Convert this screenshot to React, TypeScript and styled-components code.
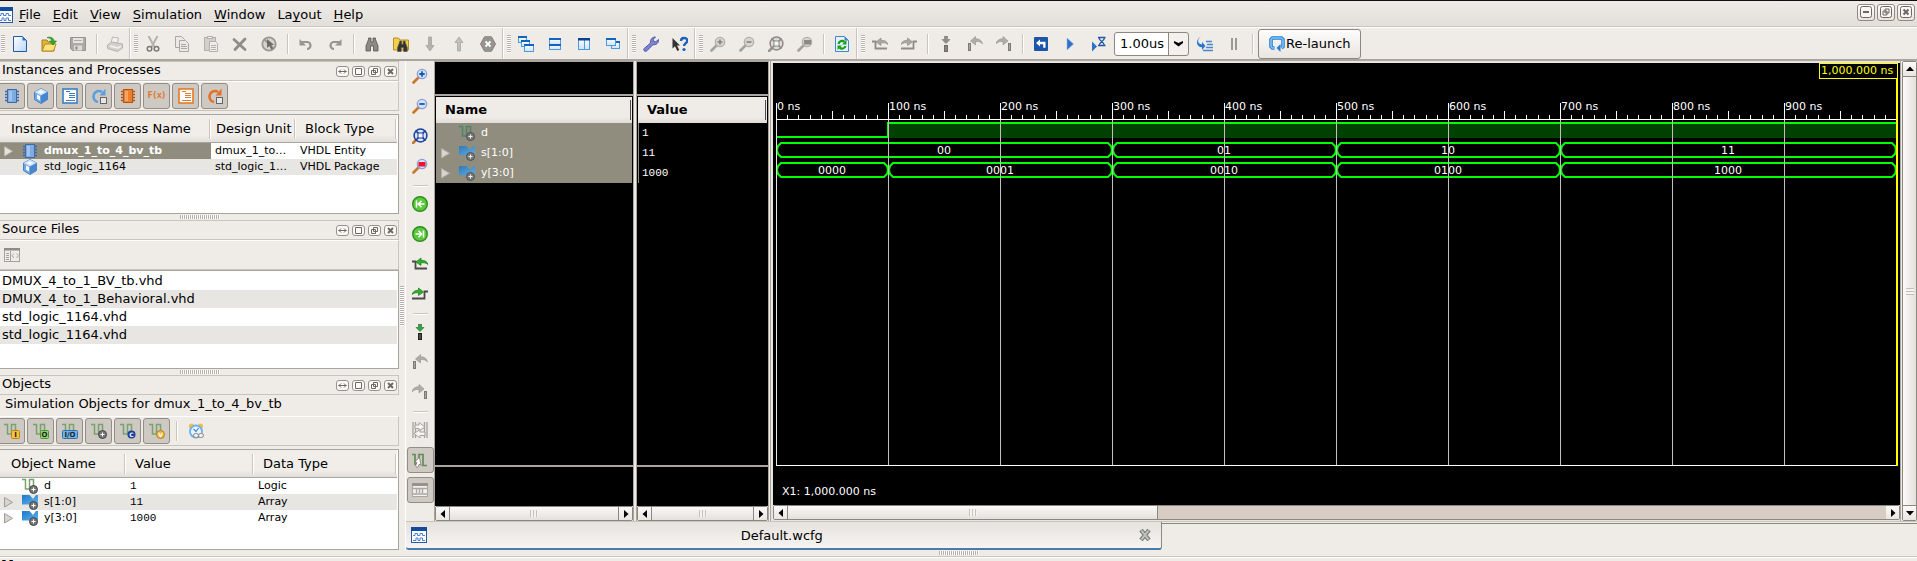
import React, { ReactNode, useLayoutEffect, useRef, useState } from "react";
import styled, { createGlobalStyle, css } from "styled-components";

const C = {
  bg: "#efebe7",
  line: "#c9c4bd",
  mid: "#aaa59e",
  dark: "#8c877f",
  press: "#cfc9c4",
  alt: "#e8e6e3",
  sel: "#918d7e",
};

const Global = createGlobalStyle`
  * { box-sizing: border-box; }
  html, body { margin: 0; background: ${C.bg}; overflow: hidden; }
  body, button, select { font-family: "DejaVu Sans", sans-serif; font-size: 13px; color: #000; }
  button { padding: 0; margin: 0; border: 0; background: none; }
`;

/* ---------- icons ---------- */

const GlassIcon = ({ gray, children }: { gray?: boolean; children?: ReactNode }) => (
  <>
    <path d="M1.500 14.500L7 9" stroke={gray ? "#a5a29e" : "#c9782a"} strokeWidth="2.600" strokeLinecap="round" />
    <circle cx="10" cy="6" r="4.700" fill={gray ? "#d8d5d1" : "#cfe5fb"} stroke={gray ? "#b3b0ac" : "#8e9cdf"} strokeWidth="1.300" />
    {children}
  </>
);

const FitIcon = ({ gray }: { gray?: boolean }) => {
  const c = gray ? "#8d8a86" : "#1c3f9c";
  return (
    <>
      <path d="M1 15l3-3" stroke={gray ? "#9a9793" : "#c9782a"} strokeWidth="2.600" strokeLinecap="round" />
      <circle cx="8.500" cy="7.500" r="6.400" fill={gray ? "#dedbd7" : "#d5e6fa"} stroke={c} strokeWidth="1.500" />
      <path d="M3.500 2.500L13.500 12.500M13.500 2.500L3.500 12.500" stroke={c} strokeWidth="1.700" />
      <rect x="6" y="5" width="5" height="5" fill="#f4f6fb" stroke={c} />
    </>
  );
};

const PrevEdge = ({ gray }: { gray?: boolean }) => (
  <>
    <path d="M0 5.500h3.500v7H15" fill="none" stroke={gray ? "#8f8c88" : "#4a4a4a"} strokeWidth="1.800" />
    <path d="M4 6l5-4v2.300c4 0 6 1 7 4.200-2-1.700-4-1.900-7-1.700V9.500z" fill={gray ? "#aaa7a3" : "#2fae2f"} stroke={gray ? "#8f8c88" : "#187a18"} strokeWidth=".7" />
  </>
);
const NextEdge = ({ gray }: { gray?: boolean }) => (
  <>
    <path d="M0 12.500h12.500v-7H16" fill="none" stroke={gray ? "#8f8c88" : "#4a4a4a"} strokeWidth="1.800" />
    <path d="M11.500 6l-5-4v2.300C3 4.300 1 5.300 0 8.500c2-1.700 4-1.900 6.500-1.700V9.500z" fill={gray ? "#aaa7a3" : "#2fae2f"} stroke={gray ? "#8f8c88" : "#187a18"} strokeWidth=".7" />
  </>
);
const Marker = ({ gray }: { gray?: boolean }) => (
  <>
    <path d="M6.500 0h3v3.500H12L8 7.500 4 3.500h2.500z" fill={gray ? "#908d89" : "#35a047"} stroke={gray ? "#7b7874" : "#1d7430"} strokeWidth=".6" />
    <rect x="6.500" y="9.500" width="3" height="6" fill={gray ? "#8a8783" : "#4c4c4c"} stroke={gray ? "#6f6c68" : "#222"} />
  </>
);
const prevMarker = (
  <>
    <rect x="1.500" y="7.500" width="2" height="7" fill="#a9a6a2" stroke="#7c7975" />
    <path d="M3.500 5l5-4.500v2.300c4 0 6 1.500 7 5-2-2-4-2.500-7-2.300V9z" fill="#b0ada9" stroke="#93908c" strokeWidth=".6" />
  </>
);
const nextMarker = (
  <>
    <rect x="12.500" y="7.500" width="2" height="7" fill="#a9a6a2" stroke="#7c7975" />
    <path d="M12 5L7 .5v2.300c-4 0-6 1.500-7 5 2-2 4-2.500 7-2.300V9z" fill="#b0ada9" stroke="#93908c" strokeWidth=".6" />
  </>
);
const Win = ({ x, y, w, h }: { x: number; y: number; w: number; h: number }) => (
  <>
    <rect x={x + 0.5} y={y + 0.5} width={w - 1} height={h - 1} fill="url(#winFill)" stroke="#4c9ae0" />
    <rect x={x} y={y} width={w} height="2" fill="#1263bd" />
  </>
);
const Chip = ({ a, b }: { a: string; b: string }) => (
  <>
    <path d="M1 3.500h14M1 6.500h14M1 9.500h14M1 12.500h14" stroke={b} strokeWidth="1.300" />
    <rect x="3.500" y="1.500" width="9" height="13" fill={a} stroke={b} />
    <path d="M5 3h3v10H5z" fill="#fff" opacity=".3" />
  </>
);
const Doc = ({ c }: { c: string }) => (
  <>
    <rect x="1" y="1" width="14" height="14" fill="#fff" stroke={c} strokeWidth="1.600" />
    <path d="M4 3.500h4M7 5.500h6M7 7.500h6M7 9.500h6M4 12.500h9" stroke={c} strokeWidth="1.100" />
  </>
);
const Cycle = ({ c }: { c: string }) => (
  <>
    <path d="M7 14A5.500 5.500 0 1 1 11 4" fill="none" stroke={c} strokeWidth="2.600" />
    <path d="M8.500 7.500h6v-7z" fill={c} />
    <rect x="9.500" y="9.500" width="6" height="6" fill="#e8e6e3" stroke="#666" />
  </>
);
const binoc = (f: string) => (
  <path d="M2 15V10L4.500 3.500V2h2.500v4h2V2h2.500v1.500L14 10v5H9.500v-5h-3v5z" fill={f} stroke="#55524f" strokeWidth=".8" />
);
const Wave = ({ c = "#79a36c", children }: { c?: string; children?: ReactNode }) => (
  <>
    <path d="M0 1.500h3.500v9.500h4V1.500h4V12" fill="none" stroke={c} strokeWidth="1.500" />
    {children}
  </>
);
const Gear = () => (
  <>
    <circle cx="11.500" cy="11.500" r="4" fill="#77777a" stroke="#454547" />
    <path d="M11.500 9.500v4M9.500 11.500h4" stroke="#fff" strokeWidth="1" />
  </>
);
const Tag = ({ f, s, w = 8, t }: { f: string; s: string; w?: number; t: string }) => (
  <>
    <rect x={15.5 - w} y="7.500" width={w} height="8" fill={f} stroke={s} rx="1" />
    <text x={15.5 - w / 2} y="14" fontSize="7" fontWeight="bold" textAnchor="middle" fill="#222">{t}</text>
  </>
);
const waveWindow = (
  <>
    <rect x=".5" y=".5" width="15" height="15" fill="#fff" stroke="#2757a5" />
    <rect x="0" y="0" width="16" height="4" fill="#0f4c9e" />
    <path d="M2 8.500h2v-2h2.500v2H9v-2h2.500v2H14M2 13.500h3v-2.500h2v2.500h2v-2.500h2.500v2.500H14" fill="none" stroke="#4a80d8" />
  </>
);

const icons: Record<string, ReactNode> = {
  waveWindow,
  new: (
    <>
      <path d="M1.500.5h9l4 4v11h-13z" fill="url(#pageFill)" stroke="#2559a4" />
      <path d="M10.500.5v4h4z" fill="#2f6fc4" />
    </>
  ),
  open: (
    <>
      <path d="M1 15V4h5l1 2h6v9z" fill="#e0b63c" stroke="#a97c18" />
      <path d="M1 15l3-7h11l-2.500 7z" fill="#fbe27a" stroke="#b58a22" />
      <path d="M6 1.500c4-1 6.500 0 7 3.500h2.500L12 9 8.500 5H11C10.500 3 9 2 6 1.500z" fill="#35a82c" stroke="#1c7d18" strokeWidth=".6" />
    </>
  ),
  save: (
    <>
      <path d="M.5 1.500h15v13h-13l-2-2z" fill="#aeaba7" stroke="#96938f" />
      <rect x="3" y="2" width="10" height="5" fill="#e6e4e1" />
      <path d="M4 4.500h8" stroke="#b0ada9" />
      <rect x="4" y="9.500" width="8" height="5" fill="#dddad7" />
      <rect x="5.500" y="10.500" width="2" height="3" fill="#8b8884" />
    </>
  ),
  print: (
    <>
      <path d="M4 7l1.500-6 6 1-1 5z" fill="#f3f1ee" stroke="#bbb8b4" />
      <path d="M.5 9l4-3 11 2v4l-5 3.500-10-3z" fill="#d3d0cc" stroke="#b5b2ae" />
      <path d="M3 10l8 2 3-2" stroke="#f5f3f0" strokeWidth="1.400" fill="none" />
    </>
  ),
  cut: (
    <>
      <path d="M3.500 0l6 11M12.500 0l-6 11" stroke="#b5b2ae" strokeWidth="2" />
      <circle cx="4.500" cy="12.700" r="2.300" fill="none" stroke="#7d7a76" strokeWidth="1.500" />
      <circle cx="11.500" cy="12.700" r="2.300" fill="none" stroke="#7d7a76" strokeWidth="1.500" />
    </>
  ),
  copy: (
    <g fill="#eceae7" stroke="#aaa7a3">
      <path d="M1.500.5h6l3 3v8h-9z" />
      <path d="M5.500 4.500h6l3 3v8h-9z" />
      <path d="M7 8.500h5M7 10.500h6M7 12.500h6" />
    </g>
  ),
  paste: (
    <g stroke="#b3b0ac">
      <rect x="1.500" y="1.500" width="11" height="13" fill="#d2cfcb" />
      <rect x="4.500" y=".5" width="5" height="2" fill="#eee" />
      <path d="M6.500 5.500h6l2 2v8h-8z" fill="#f0eeeb" />
      <path d="M8 9.500h5M8 11.500h5M8 13.500h5" />
    </g>
  ),
  del: <path d="M2 3.500l11 10M13 3L3 13.500" stroke="#8f8c88" strokeWidth="2.800" strokeLinecap="round" />,
  nosel: (
    <>
      <circle cx="8" cy="8" r="6.700" fill="#d6d3cf" stroke="#9b9894" strokeWidth="1.800" />
      <path d="M3 3l10 10" stroke="#9b9894" strokeWidth="1.800" />
      <path d="M6 3v9l2.300-2 2 3.500 1.700-1-2-3.300 3-.5z" fill="#6f6c68" />
    </>
  ),
  undo: (
    <>
      <path d="M4 6h5a3.500 3.500 0 0 1 0 7" fill="none" stroke="#989591" strokeWidth="2.200" />
      <path d="M1.500 3v6.500H8z" fill="#989591" />
    </>
  ),
  redo: (
    <>
      <path d="M12 6H7a3.500 3.500 0 0 0 0 7" fill="none" stroke="#989591" strokeWidth="2.200" />
      <path d="M14.500 3v6.500H8z" fill="#989591" />
    </>
  ),
  find: binoc("#8d8a86"),
  findIn: (
    <>
      <path d="M.5 14V2h5l1.500 2h8.500v10z" fill="#f1d04a" stroke="#b58f24" />
      <g transform="translate(3 3.500) scale(.8)">{binoc("#333")}</g>
    </>
  ),
  down: <path d="M6.500 1h3v8.500H12L8 15 4 9.500h2.500z" fill="#b5b2ae" stroke="#a09d99" strokeWidth=".7" />,
  up: <path d="M6.500 15h3V6.500H12L8 1 4 6.500h2.500z" fill="#c2bfbb" stroke="#a09d99" strokeWidth=".7" />,
  stop: (
    <>
      <path d="M4.500.8h7L15.500 8l-4 7.200h-7L.5 8z" fill="#979490" stroke="#85827e" />
      <path d="M5.500 5.500l5 5M10.500 5.500l-5 5" stroke="#fff" strokeWidth="1.800" />
    </>
  ),
  cascade: (<><Win x={0} y={0} w={9} h={7} /><Win x={3} y={4} w={9} h={7} /><Win x={6} y={8} w={10} h={8} /></>),
  tileH: (<><Win x={2} y={2} w={12} h={7} /><Win x={2} y={8} w={12} h={6} /></>),
  tileV: (<><Win x={2} y={2} w={7} h={12} /><Win x={8} y={2} w={6} h={12} /><path d="M2 2h12v2.500H2z" fill="#0d3f94" /></>),
  float: (<><Win x={6} y={5} w={9} h={8} /><Win x={1} y={2} w={10} h={8} /></>),
  wrench: (
    <path d="M1 14.500c-1-1 0-2 .5-2.300L7.500 7C7 4 9 .8 12.500 1L10.300 3.300l.5 2 2 .5L15.500 3.500c.5 3.500-2.500 5.700-5.500 5.200l-6 6c-1 1-2.200.8-3-.2z" fill="#7d83cf" stroke="#4a4fa3" strokeWidth=".9" />
  ),
  help: (
    <>
      <path d="M.5 2v10.500l2.500-2.300 2.300 4.800 2-1-2.300-4.500h3z" fill="#333" />
      <path d="M9 5c0-4 6.300-4 6.300-.3 0 2.500-3.200 2.500-3.200 5.300" fill="none" stroke="#1a62b8" strokeWidth="2.400" />
      <circle cx="12" cy="13.500" r="1.600" fill="#1a62b8" />
    </>
  ),
  zoomInG: <GlassIcon gray><path d="M7.500 6h5M10 3.500v5" stroke="#85827e" strokeWidth="1.600" /></GlassIcon>,
  zoomOutG: <GlassIcon gray><path d="M7.500 6h5" stroke="#85827e" strokeWidth="1.600" /></GlassIcon>,
  zoomSelG: <GlassIcon gray><rect x="7" y="4" width="7" height="4.500" fill="#8c8985" /></GlassIcon>,
  fitG: <FitIcon gray />,
  zoomIn: <GlassIcon><path d="M7.300 6h5.400M10 3.300v5.400" stroke="#1c57a8" strokeWidth="1.800" /></GlassIcon>,
  zoomOut: <GlassIcon><path d="M7.300 6h5.400" stroke="#1c57a8" strokeWidth="1.800" /></GlassIcon>,
  zoomSel: <GlassIcon><rect x="6.500" y="4" width="7" height="4.500" fill="#f0102a" /></GlassIcon>,
  fit: <FitIcon />,
  refresh: (
    <>
      <path d="M1.500.5h9l4 4v11h-13z" fill="#e6f1fd" stroke="#4584cf" />
      <path d="M10.500.5v4h4z" fill="#4584cf" />
      <path d="M4.500 8a3.500 3.500 0 0 1 6-2M11.500 10a3.500 3.500 0 0 1-6 1.500" fill="none" stroke="#17a11b" strokeWidth="2.200" />
      <path d="M12.500 4v4.500H8zM3.500 14V9.500H8z" fill="#17a11b" />
    </>
  ),
  prevEdgeG: <PrevEdge gray />,
  nextEdgeG: <NextEdge gray />,
  prevEdge: <PrevEdge />,
  nextEdge: <NextEdge />,
  markerG: <Marker gray />,
  marker: <Marker />,
  prevMarker,
  nextMarker,
  restart: (
    <>
      <rect x="1" y="1" width="14" height="14" rx="1" fill="#1b56aa" />
      <path d="M3 7l4-3.500v2.300h5.500v6h-2.300V8.300H7v2.300z" fill="#fff" />
    </>
  ),
  run: <path d="M5 2v12l6.500-6z" fill="#2f6fc4" stroke="#8fb6e6" strokeWidth=".6" />,
  runFor: (
    <>
      <path d="M1 5.500v10L6 10.500z" fill="#2f6fc4" />
      <path d="M7 1.500h7.500M7 9.500h7.500M8 2c0 3 5.500 4 5.500 7.500M13.500 2c0 3-5.500 4-5.500 7.500" fill="none" stroke="#1c57a8" strokeWidth="1.300" />
    </>
  ),
  step: (
    <>
      <path d="M4 .5C0 3 0 8 5 8.500V6l3.500 4L5 14v-2.700C-1.500 11-1.500 3 4 .5z" fill="#2a77cc" />
      <path d="M9 5.500h6M10 8.500h6M9 11.500h7M6 14.500h10" stroke="#4a86cf" strokeWidth="1.500" />
    </>
  ),
  pause: (
    <>
      <rect x="5" y="2" width="2" height="12" fill="#9b9894" />
      <rect x="9" y="2" width="2" height="12" fill="#9b9894" />
    </>
  ),
  relaunch: (
    <>
      <path d="M5.500 12H3.500L2 10.500v-7L3.500 2h9L14 3.500v7L12.500 12" fill="none" stroke="#2a7fd0" strokeWidth="3.600" />
      <path d="M5.500 12H3.500L2 10.500v-7L3.500 2h9L14 3.500v7L12.500 12" fill="none" stroke="#7cc4fb" strokeWidth="1.600" />
      <path d="M7.500 12l4-4v8z" fill="#2a7fd0" />
    </>
  ),
  chip: <Chip a="#7fabe3" b="#3f6aa8" />,
  chipO: <Chip a="#ee7f2d" b="#b4520f" />,
  cube: (
    <>
      <path d="M8 .5l6.500 3.500v7.500L8 15.500 1.500 11.500V4z" fill="#6fa8e4" stroke="#4a7fbe" />
      <path d="M8 .5l6.500 3.500L8 7.500 1.500 4z" fill="#cde2f8" />
      <path d="M8 7.500v8l6.500-4V4z" fill="#4a86cf" />
      <path d="M4 6.500l3 1.600v4.500L4 10.700zM4.500 4L8 2.300 11.500 4 8 5.800z" fill="#f4f9ff" />
    </>
  ),
  doc: <Doc c="#3e7dc0" />,
  docO: <Doc c="#e07b2a" />,
  cycle: <Cycle c="#5b9fe0" />,
  cycleO: <Cycle c="#e0722a" />,
  srcWin: (
    <>
      <rect x=".5" y="1.500" width="15" height="13" fill="#efedea" stroke="#a5a29e" />
      <path d="M0 1h16v2.500H0z" fill="#8f8c88" />
      <path d="M6.500 4v10M2 6.500h3M2 8.500h3M2 10.500h3M2 12.500h3M10 6.500L8 8.700l2 2.300M12.500 6.500l2 2.200-2 2.300" fill="none" stroke="#a5a29e" />
    </>
  ),
  sigI: <Wave><Tag f="#fbc33a" s="#b98412" t="I" /></Wave>,
  sigO: <Wave><Tag f="#8fd56b" s="#4d9138" t="O" /></Wave>,
  sigIO: <Wave><Tag f="#6fb4ee" s="#2f6fae" w={15} t="I/O" /></Wave>,
  sigInt: <Wave><Gear /></Wave>,
  sigSel: <Wave c="#3f8468"><Gear /></Wave>,
  sigC: (
    <Wave>
      <circle cx="11.500" cy="11.500" r="4" fill="#1d3f9a" />
      <text x="11.500" y="14" fontSize="6" fontWeight="bold" textAnchor="middle" fill="#fff">C</text>
    </Wave>
  ),
  sigV: (
    <Wave>
      <circle cx="11.500" cy="11.500" r="4" fill="#efb845" stroke="#b5811b" />
      <text x="11.500" y="14" fontSize="6" fontWeight="bold" textAnchor="middle" fill="#fff">V</text>
    </Wave>
  ),
  clock: (
    <>
      <circle cx="3.500" cy="3" r="2.600" fill="#f4bd4c" />
      <circle cx="12.500" cy="3" r="2.600" fill="#f4bd4c" />
      <circle cx="8" cy="8.500" r="6" fill="#e8f4fe" stroke="#6bb1ea" strokeWidth="1.800" />
      <path d="M5.500 6L8 8.500 10.500 5" fill="none" stroke="#4a86cf" strokeWidth="1.200" />
      <rect x="5.500" y="10.500" width="5" height="4" rx="2" fill="#eee" stroke="#888" />
      <rect x="10.500" y="10.500" width="5" height="4" rx="2" fill="#eee" stroke="#888" />
    </>
  ),
  bus: (
    <>
      <path d="M0 1h7.500L11 5l3-4h2v9.500H0z" fill="url(#busFill)" />
      <Gear />
    </>
  ),
  first: (
    <>
      <circle cx="8" cy="8" r="7.300" fill="#5cc83c" stroke="#2a8f1d" strokeWidth="1.400" />
      <path d="M4.500 4.500v7M12.500 8H7M9.500 4.700L6.300 8l3.200 3.300" fill="none" stroke="#fff" strokeWidth="1.500" />
    </>
  ),
  last: (
    <>
      <circle cx="8" cy="8" r="7.300" fill="#5cc83c" stroke="#2a8f1d" strokeWidth="1.400" />
      <path d="M11.500 4.500v7M3.500 8H9M6.500 4.700L9.700 8l-3.200 3.300" fill="none" stroke="#fff" strokeWidth="1.500" />
    </>
  ),
  swap: (
    <>
      <path d="M1 0v16M3.500 0v16M12.500 0v16M15 0v16" stroke="#a5a29e" strokeWidth="1.300" />
      <path d="M3 3h4V.5L13 5 7 9V6.500H3z" fill="#f6f4f1" stroke="#a5a29e" />
      <path d="M13 10H8V7.500L2 11.500 8 16v-2.500h5z" fill="#f6f4f1" stroke="#a5a29e" />
    </>
  ),
  snap: (
    <>
      <path d="M0 2.500h3V13M7 13V2.500h4v11h4" fill="none" stroke="#5f8f57" strokeWidth="1.700" />
      <path d="M7.500 5L3 10l2 .5L3.500 14l2 1.500 2-3.500 1.500 1.500z" fill="#fff" stroke="#77746f" strokeWidth=".8" />
    </>
  ),
  table: (
    <>
      <rect x=".5" y="1.500" width="15" height="13" fill="#f3f1ee" stroke="#aaa7a3" />
      <path d="M0 1h16v3H0z" fill="#96938f" />
      <path d="M1 6.500h14M4.500 7v4M7.500 7v4M10.500 7v4M1 12h14" stroke="#aaa7a3" strokeWidth="1.400" />
    </>
  ),
  closeTab: (
    <>
      <path d="M4 3l8 10M12 3L4 13" stroke="#7b7f78" strokeWidth="4.400" />
      <path d="M4.500 3.500l7 9M11.500 3.500l-7 9" stroke="#c3c6c0" strokeWidth="2" />
    </>
  ),
};

const Svg = styled.svg`
  display: block;
  flex: none;
  font-family: "DejaVu Sans", sans-serif;
`;
const Icon = ({ n, size = 16 }: { n: string; size?: number }) => (
  <Svg width={size} height={size} viewBox="0 0 16 16" fill="none" aria-hidden>{icons[n]}</Svg>
);
const HiddenSvg = styled.svg`position: absolute;`;
const Gradients = () => (
  <HiddenSvg width="0" height="0" aria-hidden>
    <linearGradient id="pageFill" x1="0" y1="0" x2="1" y2="1"><stop offset="0" stopColor="#fff" /><stop offset="1" stopColor="#b9d6f8" /></linearGradient>
    <linearGradient id="winFill" x1="0" y1="0" x2="0" y2="1"><stop offset="0" stopColor="#fff" /><stop offset="1" stopColor="#cfe2f6" /></linearGradient>
    <linearGradient id="busFill" x1="0" y1="0" x2="1" y2="1"><stop offset="0" stopColor="#1d78c6" /><stop offset="1" stopColor="#5fb4f0" /></linearGradient>
  </HiddenSvg>
);

/* ---------- frame ---------- */

const Window = styled.div`
  height: 100vh;
  display: flex;
  flex-direction: column;
  overflow: hidden;
  background: ${C.bg};
  border-top: 1px solid #120d12;
  line-height: 16px;
`;
const MenuBar = styled.nav`
  flex: none;
  height: 26px;
  display: flex;
  align-items: center;
  padding-top: 2px;
  background: linear-gradient(#efebe7, #e2dfda);
  border-bottom: 1px solid ${C.line};
`;
const MenuIcon = styled.span`margin-left: -3px;`;
const MenuItem = styled.button`
  padding: 0 6px;
  line-height: 16px;
  u {
    text-decoration-thickness: 1px;
    text-underline-offset: 2px;
    text-decoration-skip-ink: none;
  }
`;
const WindowButtons = styled.div`
  margin-left: auto;
  display: flex;
  gap: 2px;
  padding: 0 2px 5px 0;
`;
const WindowButton = styled.button`
  width: 18px;
  height: 17px;
  border: 1px solid #96887f;
  border-radius: 3px;
  background: linear-gradient(#fff, #e8e4df);
  display: grid;
  place-items: center;
`;

const ToolBar = styled.div`
  flex: none;
  height: 34px;
  display: flex;
  border-top: 1px solid #fff;
  border-bottom: 2px solid ${C.mid};
`;
const Group = styled.div<{ $first?: boolean; $last?: boolean }>`
  display: flex;
  align-items: center;
  padding-left: ${(p) => (p.$first ? 1 : 3)}px;
  ${(p) => !p.$last && css`
    border-right: 1px solid #fff;
    box-shadow: inset -1px 0 ${C.line};
    padding-right: 1px;
  `}
`;
const Handle = styled.span`
  width: 4px;
  height: 18px;
  background: repeating-linear-gradient(#b5b1ab 0 1px, #fff 1px 2px);
`;
const Tool = styled.button`
  width: 29px;
  height: 28px;
  display: grid;
  place-items: center;
`;
const Sep = styled.span`
  width: 8px;
  height: 20px;
  background: linear-gradient(90deg, transparent 4px, ${C.line} 4px 5px, #fff 5px 6px, transparent 6px);
`;
const Combo = styled.div`
  display: grid;
  align-items: center;
  margin: 0 1px;
  select, svg { grid-area: 1 / 1; }
  svg { justify-self: end; margin-right: 6px; pointer-events: none; }
`;
const Select = styled.select`
  appearance: none;
  width: 75px;
  height: 24px;
  padding: 0 0 0 5px;
  border: 1px solid ${C.dark};
  border-radius: 3px;
  background: linear-gradient(90deg, #fff 53px, ${C.dark} 53px 54px, #f3f0ed 54px);
`;
const Relaunch = styled.button`
  height: 30px;
  margin-left: 2px;
  padding: 0 9px 0 10px;
  display: flex;
  align-items: center;
  gap: 1px;
  border: 1px solid ${C.dark};
  border-radius: 3px;
  background: linear-gradient(#fdfcfb, #e9e5e0);
`;

const Main = styled.main`
  flex: 1;
  min-height: 0;
  display: flex;
`;

/* ---------- left dock ---------- */

const Dock = styled.aside`
  flex: none;
  width: 399px;
  display: flex;
  flex-direction: column;
  min-height: 0;
`;
const Panel = styled.section<{ $fixed: number; $share: number }>`
  flex: ${(p) => p.$share} 1 ${(p) => p.$fixed}px;
  min-height: 0;
  display: flex;
  flex-direction: column;
`;
const TitleBar = styled.header`
  flex: none;
  height: 20px;
  display: flex;
  justify-content: space-between;
  padding: 0 1px 0 2px;
  border-top: 1px solid ${C.line};
  border-bottom: 1px solid ${C.line};
  border-right: 1px solid ${C.line};
`;
const Title = styled.h2`
  margin: 0;
  font-size: 13px;
  font-weight: 400;
  line-height: 16px;
`;
const TitleButtons = styled.div`
  display: flex;
  align-items: center;
  gap: 3px;
`;
const TitleButton = styled.button`
  width: 13px;
  height: 11px;
  border: 1px solid #96918a;
  border-radius: 3px;
  background: #fbfaf8;
  display: grid;
  place-items: center;
`;
const DockTools = styled.div`
  flex: none;
  height: 30px;
  display: flex;
  align-items: center;
  gap: 2px;
  margin-left: -2px;
  border-top: 1px solid #fff;
  border-right: 1px solid ${C.line};
  border-bottom: 1px solid ${C.line};
`;
const Toggle = styled.button<{ $on?: boolean }>`
  width: 27px;
  height: 26px;
  display: grid;
  place-items: center;
  ${(p) => p.$on && css`
    border: 1px solid #938d86;
    border-radius: 3px;
    background: ${C.press};
  `}
`;
const FxLabel = styled.span`
  color: #dd7f3a;
  font-size: 8px;
  line-height: 12px;
  font-weight: 700;
`;
const Caption = styled.p`
  flex: none;
  margin: 0;
  height: 21px;
  padding-left: 5px;
  line-height: 18px;
`;
const Body = styled.div<{ $gap?: boolean }>`
  flex: 1;
  min-height: 0;
  margin-top: ${(p) => (p.$gap ? 3 : 0)}px;
  border: solid ${C.mid};
  border-width: 1px 1px 1px 0;
  padding-right: 1px;
  background: #fff;
  overflow: hidden;
`;
const Grid = styled.table`
  width: 100%;
  table-layout: fixed;
  border-collapse: collapse;
  font-size: 11px;
  thead { background: linear-gradient(#f1eeea 20px, #e2deda); }
`;
const Th = styled.th<{ $pad: number; $w?: number }>`
  width: ${(p) => (p.$w ? `${p.$w}px` : "auto")};
  height: 27px;
  padding: 2px 0 0 ${(p) => p.$pad}px;
  border-bottom: 1px solid ${C.mid};
  background: linear-gradient(${C.line}, ${C.line}) right 1px top 4px / 1px 20px no-repeat,
    linear-gradient(#fff, #fff) right 0 top 4px / 1px 20px no-repeat;
  text-align: left;
  font-size: 13px;
  font-weight: 400;
  white-space: nowrap;
`;
const Tr = styled.tr<{ $alt?: boolean }>`
  background: ${(p) => (p.$alt ? C.alt : "#fff")};
`;
const Td = styled.td<{ $sel?: boolean; $mono?: boolean }>`
  height: 16px;
  padding: 0 0 0 4px;
  line-height: 16px;
  white-space: nowrap;
  overflow: hidden;
  ${(p) => p.$sel && css`
    background: ${C.sel};
    color: #fff;
    font-weight: 700;
  `}
  ${(p) => p.$mono && css`font-family: "Liberation Mono", monospace;`}
`;
const NameCell = styled.div`
  display: grid;
  grid-template-columns: 18px 22px 1fr;
  align-items: center;
  height: 16px;
`;
const FileList = styled.ul`
  margin: 0;
  padding: 1px 0 0;
  list-style: none;
`;
const FileRow = styled.li<{ $alt?: boolean }>`
  height: 18px;
  padding-left: 2px;
  line-height: 18px;
  background: ${(p) => (p.$alt ? C.alt : "#fff")};
`;
const HSplit = styled.div`
  flex: none;
  height: 6px;
  display: grid;
  place-items: center;
  &::after {
    content: "";
    width: 40px;
    height: 4px;
    background: repeating-linear-gradient(90deg, #b5b1ab 0 1px, #fff 1px 2px);
  }
`;
const VSplit = styled.div`
  flex: none;
  width: 6px;
  display: grid;
  place-items: center;
  &::after {
    content: "";
    width: 4px;
    height: 40px;
    background: repeating-linear-gradient(#b5b1ab 0 1px, #fff 1px 2px);
  }
`;

const Expander = ({ light }: { light?: boolean }) => (
  <Svg width="10" height="12" viewBox="0 0 10 12" aria-hidden>
    <path d="M.5 1.500v9.500L8.500 6.300z" fill={light ? "#e4e2de" : "#d8d5d1"} stroke={light ? "#b9b6af" : "#a09d99"} />
  </Svg>
);

const glyphs: Record<string, string> = {
  arrows: "M.5 4.500h8M3 2.500l-2 2 2 2M6 2.500l2 2-2 2",
  max: "M1.500 1.500h6v6h-6z",
  restore: "M3.500 1.500h4v4h-4zM1.500 3.500h4v4h-4z",
  close: "M2 2l5 5M7 2l-5 5",
  min: "M1.500 4.500h6",
};
const Glyph = ({ n }: { n: string }) => (
  <Svg width="9" height="9" viewBox="0 0 9 9" aria-hidden>
    <path d={glyphs[n]} fill="none" stroke="#6c6862" strokeWidth={n === "close" || n === "min" ? 2 : 1} />
  </Svg>
);
const BoxGlyph = ({ n }: { n: string }) => (
  <Svg width="12" height="12" viewBox="0 0 12 12" aria-hidden>
    <rect x=".5" y=".5" width="11" height="11" rx="2" fill="#f8f6f4" stroke="#6c6862" />
    <path transform="translate(1.500 1.500)" d={glyphs[n]} fill="none" stroke="#6c6862" strokeWidth={n === "restore" ? 1 : 2} />
  </Svg>
);
const PanelTitle = ({ children }: { children: ReactNode }) => (
  <TitleBar>
    <Title>{children}</Title>
    <TitleButtons>
      {["arrows", "max", "restore", "close"].map((g) => (
        <TitleButton key={g} aria-label={g}><Glyph n={g} /></TitleButton>
      ))}
    </TitleButtons>
  </TitleBar>
);

/* ---------- wave area ---------- */

const Workspace = styled.div`
  flex: 1;
  min-width: 0;
  display: flex;
  flex-direction: column;
  border-left: 1px solid #fff;
`;
const Viewer = styled.div`
  flex: 1;
  min-height: 0;
  display: flex;
`;
const SideTools = styled.div`
  flex: none;
  width: 28px;
  display: flex;
  flex-direction: column;
  align-items: center;
`;
const SideSlot = styled.div`
  height: 30px;
  display: grid;
  place-items: center;
`;
const SideSep = styled.span`
  width: 15px;
  height: 8px;
  background: linear-gradient(transparent 4px, ${C.line} 4px 5px, #fff 5px 6px, transparent 6px);
`;
const Pane = styled.div<{ $w?: number }>`
  flex: ${(p) => (p.$w ? `0 0 ${p.$w}px` : "1")};
  min-width: 0;
  display: flex;
  flex-direction: column;
  border: solid ${C.mid};
  border-width: 1px 1px 0 1px;
  margin-right: 2px;
`;
const Black = styled.div<{ $h?: number }>`
  flex: ${(p) => (p.$h ? `0 0 ${p.$h}px` : "1")};
  min-height: 0;
  background: #000;
  color: #fff;
  font-size: 11px;
`;
const Bar = styled.div`
  flex: none;
  height: 2px;
  background: ${C.mid};
`;
const ColumnHead = styled.div`
  height: 26px;
  margin: 1px 1px 0;
  padding: 0 1px 0 9px;
  display: flex;
  align-items: center;
  justify-content: space-between;
  background: linear-gradient(${C.bg} 20px, #e0dbd6);
  color: #000;
  font-size: 13px;
  font-weight: 700;
  &::after { content: ""; width: 1px; height: 20px; background: #4a4a4a; }
`;
const SignalRow = styled.div`
  display: grid;
  grid-template-columns: 18px 22px 1fr;
  align-items: center;
  height: 20px;
  margin: 0 1px;
  padding-left: 5px;
  line-height: 18px;
  background: ${C.sel};
  svg { opacity: 0.85; }
`;
const ValueRow = styled.div`
  height: 20px;
  margin-left: 1px;
  padding-left: 3px;
  border-left: 1px solid ${C.sel};
  font-family: "Liberation Mono", monospace;
  line-height: 20px;
`;
const WavePane = styled(Pane)`
  border: solid #e8e5e1;
  border-width: 2px 0 1px 2px;
  margin: 0;
  box-shadow: -1px 0 ${C.mid}, 1px 0 ${C.mid};
`;
const WaveHost = styled.div`
  flex: 1;
  min-height: 0;
  background: #000;
  overflow: hidden;
`;
const ScrollBar = styled.div<{ $v?: boolean; $m?: number }>`
  flex: none;
  display: flex;
  flex-direction: ${(p) => (p.$v ? "column" : "row")};
  ${(p) => (p.$v ? "width: 15px; margin-left: 2px;" : "height: 15px;")}
  border: 1px solid ${C.dark};
  border-radius: 2px;
  background: #d7cdc5;
`;
const ScrollArrow = styled.button<{ $v?: boolean }>`
  flex: none;
  ${(p) => (p.$v ? "height: 14px;" : "width: 13px;")}
  display: grid;
  place-items: center;
  background: linear-gradient(#fbfaf9, #e9e6e2);
`;
const Thumb = styled.div<{ $v?: boolean; $size: string }>`
  flex: 0 1 ${(p) => p.$size};
  display: grid;
  place-items: center;
  border: solid ${C.dark};
  border-width: ${(p) => (p.$v ? "1px 0" : "0 1px")};
  background: linear-gradient(${(p) => (p.$v ? "90deg" : "180deg")}, #fbfaf9, #e4e0dc);
  &::after {
    content: "";
    width: 8px;
    height: 7px;
    background: repeating-linear-gradient(${(p) => (p.$v ? "180deg" : "90deg")}, #c4bfb9 0 1px, #f6f4f2 1px 3px);
  }
`;
const Spacer = styled.span`flex: 1;`;

const arrows: Record<string, string> = {
  left: "M6 0L1.500 4 6 8z",
  right: "M2 0l4.500 4L2 8z",
  up: "M0 6l4-4.500L8 6z",
  down: "M0 2l4 4.500L8 2z",
};
const Arrow = ({ d }: { d: string }) => (
  <Svg width="8" height="8" viewBox="0 0 8 8" aria-hidden><path d={arrows[d]} fill="#000" /></Svg>
);
const Scroll = ({ v, size = "100%" }: { v?: boolean; size?: string }) => (
  <ScrollBar $v={v}>
    <ScrollArrow $v={v} aria-label="Scroll back"><Arrow d={v ? "up" : "left"} /></ScrollArrow>
    <Thumb $v={v} $size={size} />
    {size !== "100%" && <Spacer />}
    <ScrollArrow $v={v} aria-label="Scroll forward"><Arrow d={v ? "down" : "right"} /></ScrollArrow>
  </ScrollBar>
);

type Segment = [from: number, to: number, value: string];
const buses: Segment[][] = [
  [[0, 300, "00"], [300, 500, "01"], [500, 700, "10"], [700, 1000, "11"]],
  [[0, 100, "0000"], [100, 300, "0001"], [300, 500, "0010"], [500, 700, "0100"], [700, 1000, "1000"]],
];
const hundreds = Array.from({ length: 10 }, (_, i) => i * 100);
const tens = Array.from({ length: 100 }, (_, i) => i * 10);

const Waveform = () => {
  const host = useRef<HTMLDivElement>(null);
  const [{ w, h }, setSize] = useState({ w: 1127, h: 442 });
  useLayoutEffect(() => {
    const el = host.current!;
    const measure = () => setSize({ w: el.clientWidth, h: el.clientHeight });
    measure();
    const ro = new ResizeObserver(measure);
    ro.observe(el);
    return () => ro.disconnect();
  }, []);
  const x = (ns: number) => Math.round(3 + (ns * (w - 7)) / 1000);
  const bottom = h - 39;
  return (
    <WaveHost ref={host}>
      <Svg width={w} height={h} fontSize="11" fill="#fff">
        {tens.map((t) => {
          const len = t % 100 === 0 ? 16 : t % 50 === 0 ? 8 : 4;
          return <rect key={t} x={x(t)} y={56 - len} width="1" height={len} />;
        })}
        <rect x={x(0)} y="56" width={x(1000) - x(0)} height="1" />
        {hundreds.map((t) => <text key={t} x={x(t) + 1} y="47">{t} ns</text>)}
        <rect x={x(100)} y="60" width={x(1000) - x(100)} height="15" fill="#004000" />
        <path d={`M${x(0) + 1} 74H${x(100)}V60H${x(1000)}`} fill="none" stroke="#0f0" strokeWidth="2" />
        {buses.map((row, r) => {
          const top = 80 + r * 20;
          return row.map(([a, b]) => (
            <path
              key={`${r}-${a}`}
              d={`M${x(a) + 1} ${top + 7}l1 -4 3 -3H${x(b) - 4}l3 3 1 4 -1 4 -3 3H${x(a) + 5}l-3 -3z`}
              fill="none"
              stroke="#0f0"
              strokeWidth="2"
            />
          ));
        })}
        {hundreds.map((t) => (
          <rect key={t} x={x(t)} y="57" width="1" height={bottom - 57} fill={t ? "#c0c0c0" : "#e8e8e8"} />
        ))}
        {buses.map((row, r) =>
          row.map(([a, b, v]) => (
            <text key={`${r}-${a}`} x={(x(a) + x(b)) / 2} y={91 + r * 20} textAnchor="middle">{v}</text>
          ))
        )}
        <rect x={x(0)} y={bottom - 1} width={x(1000) - x(0)} height="1" />
        <rect x={x(1000)} y="16" width="2" height={bottom - 16} fill="#ff0" />
        <rect x={w - 80.5} y=".5" width="78" height="15" fill="#000" stroke="#ff0" />
        <text x={w - 79} y="11" fill="#ff0">1,000.000 ns</text>
        <text x="9" y={h - 10}>X1: 1,000.000 ns</text>
      </Svg>
    </WaveHost>
  );
};

const TabBar = styled.div`
  flex: none;
  height: 29px;
  display: flex;
  align-items: stretch;
  border-top: 1px solid ${C.line};
`;
const Tab = styled.div`
  width: 50%;
  height: 28px;
  display: flex;
  align-items: center;
  padding: 0 8px 0 5px;
  border-right: 1px solid ${C.dark};
  border-bottom: 2px solid #4a7cab;
  border-radius: 0 0 3px 3px;
  background: linear-gradient(#e6e2de, #f6f4f1);
`;
const TabLabel = styled.button`
  flex: 1;
  text-align: center;
`;
const TabRest = styled.div`
  flex: 1;
  margin-top: 1px;
  border-top: 1px solid ${C.dark};
`;
const Console = styled.footer`
  flex: none;
  height: 5px;
  overflow: hidden;
  border-top: 1px solid ${C.line};
  box-shadow: inset 0 1px #fff;
  padding-left: 1px;
  font-weight: 700;
  line-height: 16px;
`;

/* ---------- data ---------- */

const menus: [string, string, string][] = [
  ["", "F", "ile"], ["", "E", "dit"], ["", "V", "iew"], ["", "S", "imulation"],
  ["", "W", "indow"], ["La", "y", "out"], ["", "H", "elp"],
];
const groups: string[][] = [
  ["new", "open", "save", "|", "print"],
  ["cut", "copy", "paste", "del", "nosel", "|", "undo", "redo", "|", "find", "findIn", "down", "up", "stop"],
  ["cascade", "tileH", "tileV", "float"],
  ["wrench", "help"],
  ["zoomInG", "zoomOutG", "fitG", "zoomSelG", "|", "refresh"],
];
const simTools = ["prevEdgeG", "nextEdgeG", "|", "markerG", "prevMarker", "nextMarker", "|", "restart", "run", "runFor"];
const sideTools = [
  "zoomIn", "zoomOut", "fit", "zoomSel", "|", "first", "last", "prevEdge", "nextEdge", "|",
  "marker", "prevMarker", "nextMarker", "|", "swap", "snap", "table",
];
const files = ["DMUX_4_to_1_BV_tb.vhd", "DMUX_4_to_1_Behavioral.vhd", "std_logic_1164.vhd", "std_logic_1164.vhd"];
const signals = [
  { name: "d", value: "1", type: "Logic", icon: "sigInt" },
  { name: "s[1:0]", value: "11", type: "Array", icon: "bus" },
  { name: "y[3:0]", value: "1000", type: "Array", icon: "bus" },
];

const Tools = ({ items }: { items: string[] }) => (
  <>
    {items.map((n, i) => (n === "|" ? <Sep key={i} /> : <Tool key={i} aria-label={n}><Icon n={n} /></Tool>))}
  </>
);

export default function App() {
  return (
    <Window>
      <Global />
      <Gradients />
      <MenuBar>
        <MenuIcon><Icon n="waveWindow" /></MenuIcon>
        {menus.map(([a, u, b]) => <MenuItem key={u}>{a}<u>{u}</u>{b}</MenuItem>)}
        <WindowButtons>
          {["min", "restore", "close"].map((g) => <WindowButton key={g} aria-label={g}><BoxGlyph n={g} /></WindowButton>)}
        </WindowButtons>
      </MenuBar>
      <ToolBar>
        {groups.map((g, i) => (
          <Group key={i} $first={i === 0}><Handle /><Tools items={g} /></Group>
        ))}
        <Group $last>
          <Handle />
          <Tools items={simTools} />
          <Combo>
            <Select aria-label="Run time" defaultValue="1.00us"><option>1.00us</option></Select>
            <Svg width="9" height="7" viewBox="0 0 9 7" aria-hidden><path d="M0 1l4.500 2L9 1v2L4.500 6.500 0 3z" fill="#000" /></Svg>
          </Combo>
          <Tools items={["step", "pause", "|"]} />
          <Relaunch><Icon n="relaunch" />Re-launch</Relaunch>
        </Group>
      </ToolBar>
      <Main>
        <Dock>
          <Panel $fixed={153} $share={1}>
            <PanelTitle>Instances and Processes</PanelTitle>
            <DockTools>
              {["chip", "cube", "doc", "cycle", "chipO", "fx", "docO", "cycleO"].map((n) => (
                <Toggle key={n} $on aria-label={n}>{n === "fx" ? <FxLabel>F(x)</FxLabel> : <Icon n={n} />}</Toggle>
              ))}
            </DockTools>
            <Body $gap>
              <Grid>
                <thead>
                  <tr>
                    <Th $w={211} $pad={11}>Instance and Process Name</Th>
                    <Th $w={85} $pad={5}>Design Unit</Th>
                    <Th $pad={9}>Block Type</Th>
                  </tr>
                </thead>
                <tbody>
                  <Tr>
                    <Td $sel><NameCell><Expander light /><Icon n="chip" />dmux_1_to_4_bv_tb</NameCell></Td>
                    <Td>dmux_1_to…</Td>
                    <Td>VHDL Entity</Td>
                  </Tr>
                  <Tr $alt>
                    <Td><NameCell><span /><Icon n="cube" />std_logic_1164</NameCell></Td>
                    <Td>std_logic_1…</Td>
                    <Td>VHDL Package</Td>
                  </Tr>
                </tbody>
              </Grid>
            </Body>
          </Panel>
          <HSplit />
          <Panel $fixed={149} $share={1}>
            <PanelTitle>Source Files</PanelTitle>
            <DockTools><Toggle aria-label="Source"><Icon n="srcWin" /></Toggle></DockTools>
            <Body>
              <FileList>
                {files.map((f, i) => <FileRow key={i} $alt={i % 2 === 1}>{f}</FileRow>)}
              </FileList>
            </Body>
          </Panel>
          <HSplit />
          <Panel $fixed={175} $share={1}>
            <PanelTitle>Objects</PanelTitle>
            <Caption>Simulation Objects for dmux_1_to_4_bv_tb</Caption>
            <DockTools>
              {["sigI", "sigO", "sigIO", "sigInt", "sigC", "sigV"].map((n) => (
                <Toggle key={n} $on aria-label={n}><Icon n={n} /></Toggle>
              ))}
              <Sep />
              <Toggle aria-label="Clock"><Icon n="clock" /></Toggle>
            </DockTools>
            <Body $gap>
              <Grid>
                <thead>
                  <tr>
                    <Th $w={126} $pad={11}>Object Name</Th>
                    <Th $w={128} $pad={9}>Value</Th>
                    <Th $pad={9}>Data Type</Th>
                  </tr>
                </thead>
                <tbody>
                  {signals.map((s, i) => (
                    <Tr key={s.name} $alt={i === 1}>
                      <Td><NameCell>{i ? <Expander /> : <span />}<Icon n={s.icon} />{s.name}</NameCell></Td>
                      <Td $mono>{s.value}</Td>
                      <Td>{s.type}</Td>
                    </Tr>
                  ))}
                </tbody>
              </Grid>
            </Body>
          </Panel>
        </Dock>
        <VSplit />
        <Workspace>
          <Viewer>
            <SideTools>
              {sideTools.map((n, i) =>
                n === "|" ? <SideSep key={i} /> : (
                  <SideSlot key={i}><Toggle $on={n === "snap" || n === "table"} aria-label={n}><Icon n={n} /></Toggle></SideSlot>
                )
              )}
            </SideTools>
            <Pane $w={200}>
              <Black $h={32} />
              <Bar />
              <Black>
                <ColumnHead>Name</ColumnHead>
                {signals.map((s, i) => (
                  <SignalRow key={s.name}>
                    {i ? <Expander light /> : <span />}
                    <Icon n={i ? s.icon : "sigSel"} />
                    {s.name}
                  </SignalRow>
                ))}
              </Black>
              <Bar />
              <Black $h={39} />
              <Scroll />
            </Pane>
            <Pane $w={133}>
              <Black $h={32} />
              <Bar />
              <Black>
                <ColumnHead>Value</ColumnHead>
                {signals.map((s) => <ValueRow key={s.name}>{s.value}</ValueRow>)}
              </Black>
              <Bar />
              <Black $h={39} />
              <Scroll />
            </Pane>
            <WavePane>
              <Waveform />
              <Scroll size="33%" />
            </WavePane>
            <Scroll v />
          </Viewer>
          <TabBar>
            <Tab>
              <Icon n="waveWindow" />
              <TabLabel>Default.wcfg</TabLabel>
              <Icon n="closeTab" />
            </Tab>
            <TabRest />
          </TabBar>
        </Workspace>
      </Main>
      <HSplit />
      <Console>M</Console>
    </Window>
  );
}
